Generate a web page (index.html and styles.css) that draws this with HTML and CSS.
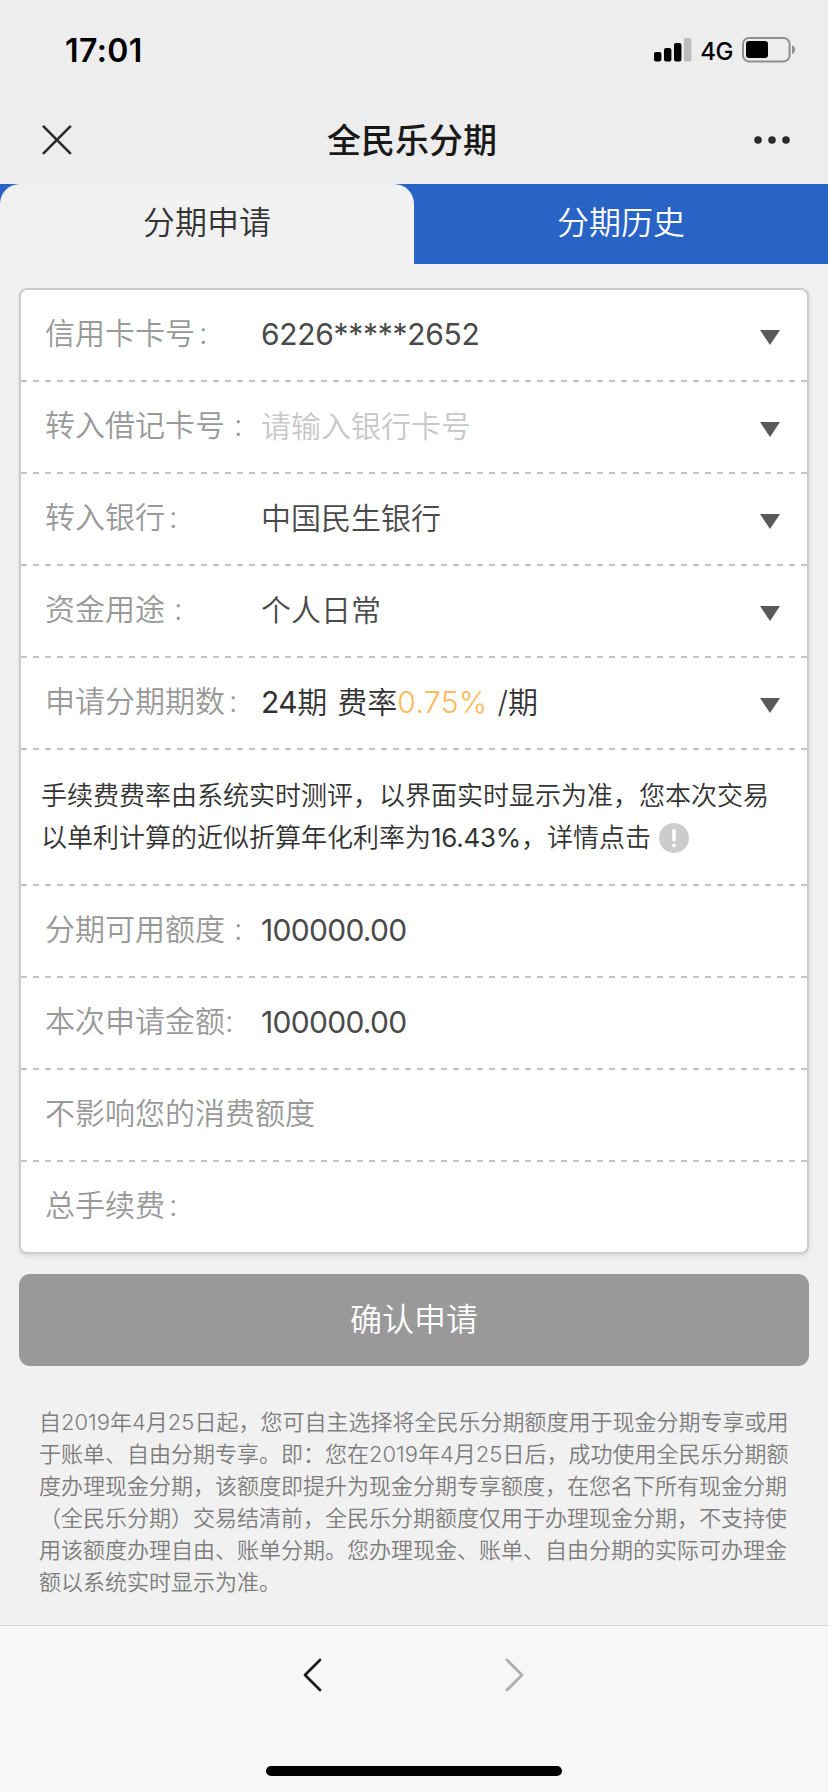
FILE: index.html
```html
<!DOCTYPE html>
<html lang="zh-CN">
<head>
<meta charset="utf-8">
<title>全民乐分期</title>
<link rel="stylesheet" href="styles.css">
</head>
<body>
<div class="screen">
  <header class="top">
    <div class="status">
      <span class="time">17:01</span>
      <div class="status-right">
        <svg class="signal" width="38" height="24" viewBox="0 0 38 24">
          <rect x="0" y="14" width="7.4" height="9.4" rx="2"/>
          <rect x="10" y="10" width="7.4" height="13.4" rx="2"/>
          <rect x="20" y="5" width="7.4" height="18.4" rx="2"/>
          <rect x="30" y="0" width="7.4" height="23.4" rx="2" fill="#bcbcbc"/>
        </svg>
        <span class="net">4G</span>
        <svg class="battery" width="54" height="26" viewBox="0 0 54 26">
          <rect x="1" y="1" width="46.6" height="23.4" rx="6" fill="none" stroke="#8f8f8f" stroke-width="2"/>
          <rect x="4" y="4" width="22" height="17" rx="3"/>
          <path d="M50 8.5a4.4 4.4 0 0 1 0 8.4z" fill="#8f8f8f"/>
        </svg>
      </div>
    </div>
    <div class="nav">
      <svg width="30" height="30" viewBox="0 0 30 30" stroke="#2b2b2b" stroke-width="2.6" stroke-linecap="round"><path d="M1.7 1.7l26.4 26.4M28.1 1.7L1.7 28.1"/></svg>
      <h1 class="title">全民乐分期</h1>
      <svg width="36" height="8" viewBox="0 0 36 8" fill="#2b2b2b"><circle cx="4" cy="4" r="3.8"/><circle cx="18" cy="4" r="3.8"/><circle cx="32" cy="4" r="3.8"/></svg>
    </div>
  </header>

  <div class="tabs">
    <div class="tab active">分期申请</div>
    <div class="tab">分期历史</div>
  </div>

  <main class="content">
    <section class="card">
      <div class="row"><span class="label">信用卡卡号<i class="colon c-mid">:</i></span><span class="value masked">6226*****2652</span><i class="arrow"></i></div>
      <div class="row"><span class="label">转入借记卡号<i class="colon c-wide">:</i></span><span class="value hint">请输入银行卡号</span><i class="arrow"></i></div>
      <div class="row"><span class="label">转入银行<i class="colon c-mid">:</i></span><span class="value">中国民生银行</span><i class="arrow"></i></div>
      <div class="row"><span class="label">资金用途<i class="colon c-wide">:</i></span><span class="value">个人日常</span><i class="arrow"></i></div>
      <div class="row"><span class="label">申请分期期数<i class="colon c-mid">:</i></span><span class="value dark"><span class="term">24</span>期 费率<span class="rate">0.75%</span> /期</span><i class="arrow"></i></div>
      <div class="note">手续费费率由系统实时测评，以界面实时显示为准，您本次交易<br>以单利计算的近似折算年化利率为<span class="pct">16.43%</span>，详情点击<svg class="info" width="30" height="30" viewBox="0 0 30 30"><circle cx="15" cy="15" r="15" fill="#ccc"/><rect x="13.2" y="6" width="3.6" height="12.5" rx="1.4" fill="#fff"/><circle cx="15" cy="22.6" r="2" fill="#fff"/></svg></div>
      <div class="row"><span class="label">分期可用额度<i class="colon c-wide">:</i></span><span class="value amount">100000.00</span></div>
      <div class="row"><span class="label">本次申请金额<i class="colon">:</i></span><span class="value amount">100000.00</span></div>
      <div class="row"><span class="label">不影响您的消费额度</span></div>
      <div class="row"><span class="label">总手续费<i class="colon c-mid">:</i></span></div>
    </section>
    <button class="submit">确认申请</button>
    <p class="terms">自2019年4月25日起，您可自主选择将全民乐分期额度用于现金分期专享或用<br>于账单、自由分期专享。即：您在2019年4月25日后，成功使用全民乐分期额<br>度办理现金分期，该额度即提升为现金分期专享额度，在您名下所有现金分期<br>（全民乐分期）交易结清前，全民乐分期额度仅用于办理现金分期，不支持使<br>用该额度办理自由、账单分期。您办理现金、账单、自由分期的实际可办理金<br>额以系统实时显示为准。</p>
  </main>

  <footer class="toolbar">
    <div class="pager">
      <svg width="20" height="34" viewBox="0 0 20 34" fill="none" stroke="#1c1c1c" stroke-width="2.8" stroke-linecap="round" stroke-linejoin="round"><path d="M17 2L2 17l15 15"/></svg>
      <svg width="20" height="34" viewBox="0 0 20 34" fill="none" stroke="#adadad" stroke-width="2.8" stroke-linecap="round" stroke-linejoin="round"><path d="M3 2l15 15L3 32"/></svg>
    </div>
    <div class="home"></div>
  </footer>
</div>
</body>
</html>
```
FILE: styles.css
```css
* { box-sizing: border-box; }
body { margin: 0; }
i { font-style: normal; }
.screen {
  width: 828px;
  height: 1792px;
  display: flex;
  flex-direction: column;
  overflow: hidden;
  background: #f1f1f1;
  font-family: Inter, "Noto Sans CJK SC", sans-serif;
  font-weight: 350;
  text-spacing-trim: space-all;
  white-space: nowrap;
}
.top { height: 184px; background: #ededed; }
.status {
  height: 96px;
  padding: 4px 32px 0 65px;
  display: flex;
  align-items: center;
  justify-content: space-between;
}
.time { font-size: 32px; font-weight: 600; letter-spacing: 0.4px; }
.status-right { display: flex; align-items: center; }
.net { margin: 2px 9px 0 8px; font-size: 24px; font-weight: 500; letter-spacing: -0.5px; }
.nav {
  height: 88px;
  padding: 0 38px 0 42px;
  display: grid;
  grid-template-columns: 60px 1fr 60px;
  align-items: center;
}
.nav svg:last-child { justify-self: end; }
.title { margin: 0; padding: 2px 8px 0 0; text-align: center; font-size: 34px; line-height: 50px; font-weight: 500; color: #191919; }
.tabs { height: 80px; flex: none; display: flex; background: #2963c6; }
.tab {
  flex: 1;
  padding-bottom: 2px;
  line-height: 78px;
  text-align: center;
  font-size: 32px;
  color: #fff;
}
.tab.active { background: #f1f1f1; border-radius: 20px 20px 0 0; color: #333; }
.content { flex: 1; padding: 24px 19px 0; }
.card {
  border: 2px solid #ccc;
  border-radius: 8px;
  background: #fff;
  box-shadow: 0 2px 4px rgba(0, 0, 0, .1);
}
.row, .note {
  background: repeating-linear-gradient(90deg, #c4c4c4 0 6px, transparent 6px 12px) left bottom / 100% 2px no-repeat;
}
.row {
  height: 92px;
  padding: 0 27px 2px 24px;
  display: flex;
  align-items: center;
  font-size: 30px;
  line-height: 44px;
}
.row:last-child { height: 90px; padding-bottom: 0; background: none; }
.label { width: 216px; padding-bottom: 4px; color: #999; }
.c-mid { margin-left: 4px; }
.c-wide { margin-left: 9px; }
.value { flex: 1; color: #4a4a4a; padding-bottom: 2px; }
.masked { font-weight: 400; letter-spacing: -0.3px; }
.amount { font-weight: 400; letter-spacing: -0.7px; }
.hint { color: #c8c8c8; }
.dark { color: #333; word-spacing: 1.6px; }
.term { font-weight: 400; letter-spacing: -0.5px; }
.rate { color: #fcb957; letter-spacing: 0.4px; }
.pct { font-weight: 400; letter-spacing: -0.3px; }
.arrow {
  margin-top: 4px;
  border: 10px solid transparent;
  border-top: 15px solid #595959;
  border-bottom: 0;
}
.note {
  height: 136px;
  padding: 25px 0 0 20px;
  font-size: 26px;
  line-height: 42px;
  color: #333;
}
.info { margin-left: 8px; vertical-align: -6px; }
.submit {
  display: block;
  width: 100%;
  height: 92px;
  margin: 20px 0 0;
  padding: 0 0 6px;
  border: 0;
  border-radius: 11px;
  background: #999;
  color: #fff;
  font: inherit;
  font-size: 32px;
}
.terms { margin: 40px 0 0 20px; font-size: 22px; line-height: 32px; color: #7d7d7d; }
.toolbar { height: 167px; flex: none; border-top: 1px solid #d6d6d6; background: #f7f7f7; }
.pager { height: 140px; padding: 32px 304px 0 303px; display: flex; justify-content: space-between; align-items: flex-start; }
.home { width: 296px; height: 10px; margin: 0 auto; border-radius: 5px; background: #000; }
```
